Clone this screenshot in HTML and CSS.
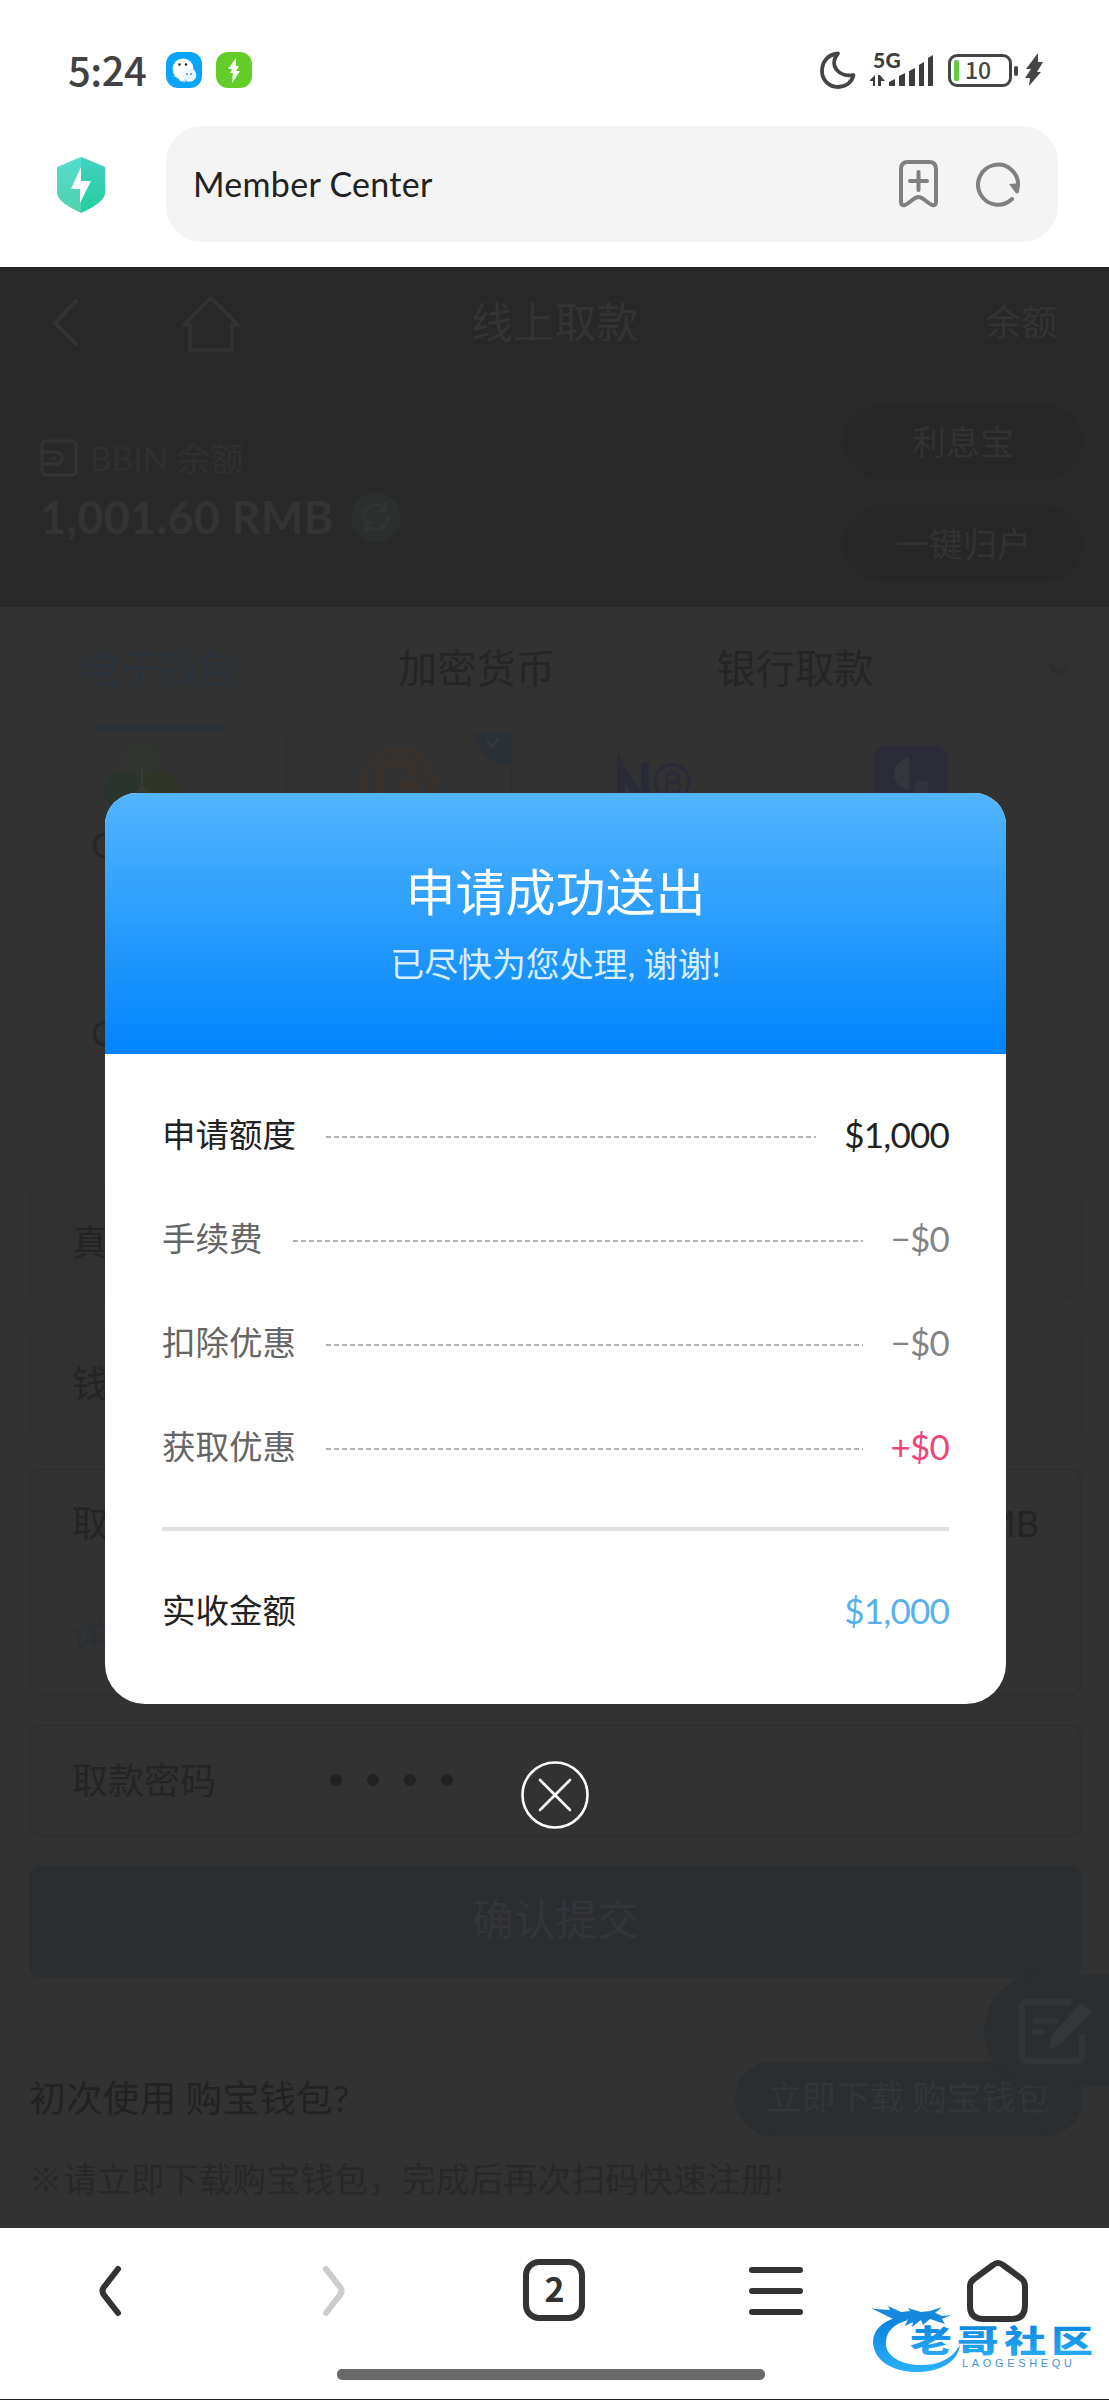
FILE: index.html
```html
<!DOCTYPE html>
<html lang="zh-CN">
<head>
<meta charset="utf-8">
<title>Member Center</title>
<link rel="stylesheet" href="styles.css">
</head>
<body>
<div class="phone">
  <header class="status">
    <span class="clock">5:24</span>
    <svg class="app" width="36" height="36" viewBox="0 0 36 36"><rect width="36" height="36" rx="12" fill="#0aa5fb"/><circle cx="17" cy="17" r="10.500" fill="#fff"/><path d="M7 24c3 1 5 1 7 5l6 1-6-7z" fill="#fff"/><circle cx="23.500" cy="23" r="6.800" fill="#e9f7ff"/><g fill="#333"><circle cx="13.500" cy="12.500" r="1.300"/><circle cx="20" cy="12.500" r="1.300"/><circle cx="21" cy="22" r=".8"/><circle cx="25" cy="22" r=".8"/></g></svg>
    <svg class="app" width="36" height="36" viewBox="0 0 36 36"><rect width="36" height="36" rx="12" fill="#63ce28"/><path d="M20 6l-8 11h4l-2 4h3l-1 10 8-12h-4l3-5h-3z" fill="#fff"/></svg>
    <div class="indicators">
      <svg width="36" height="38" viewBox="0 0 36 38"><path d="M18 2.500C7 3.500 2 11.500 2 20c0 9 7 16 16 16 8 0 14-5 15.500-12C19 27 8 14 18 2.500z" fill="none" stroke="#454545" stroke-width="3.800" stroke-linejoin="round"/></svg>
      <div class="signal">
        <span class="net">5G</span>
        <svg width="66" height="36" viewBox="0 0 66 36" fill="#3d3d3d"><path d="M0 28l5-5v11H3v-5H0zM8 23h2l5 6h-4v5H8z"/><path d="M19 34v-4l6-3v7zM29 34V24l6-3v13zM39 34V19l6-3v18zM49 34V13l5-3v24zM58 34V6l5-3v31z"/></svg>
      </div>
      <div class="battery"><i></i><b>10</b></div>
      <svg class="bolt" width="20" height="34" viewBox="0 0 20 34"><path d="M14 0L2 16h5L1 25h5L5 33 17 19h-4l6-10h-5z" fill="#454545"/></svg>
    </div>
  </header>

  <div class="address">
    <svg class="shield" width="50" height="60" viewBox="0 0 50 60"><defs><linearGradient id="sh" x1="0" y1="0" x2="0" y2="1"><stop offset="0" stop-color="#56dccb"/><stop offset="1" stop-color="#4fd3ae"/></linearGradient><linearGradient id="sr" x1="0" y1="0" x2="0" y2="1"><stop offset="0" stop-color="#42d0c0"/><stop offset="1" stop-color="#23cf9f"/></linearGradient></defs><path d="M25 1L49 11v25c0 9-12 15-24 21C13 51 1 45 1 36V11z" fill="url(#sh)"/><path d="M25 1l24 10v25c0 9-12 15-24 21z" fill="url(#sr)"/><path d="M25 11L15 33h9v14l11-22h-10z" fill="#fff"/></svg>
    <div class="urlbar">
      <span>Member Center</span>
      <svg width="42" height="50" viewBox="0 0 42 50" fill="none" stroke="#808080" stroke-width="4" stroke-linecap="round" stroke-linejoin="round"><path d="M3 10q0-7 7-7h21q7 0 7 7v33q0 4-4 3c-5-2-9-8-13.500-8S12 44 7 46q-4 1-4-3zM20.500 13v18M12 22h17"/></svg>
      <svg width="46" height="46" viewBox="0 0 46 46"><path d="M36 38A20 20 0 1 1 42 25" fill="none" stroke="#808080" stroke-width="4" stroke-linecap="round"/><path d="M33 23l11-1-1 9q-2 3-4 0z" fill="#808080"/></svg>
    </div>
  </div>

  <main class="page">
    <nav class="topbar">
      <svg width="30" height="50" viewBox="0 0 30 50"><path d="M27 3L5 26l22 22" fill="none" stroke="#343434" stroke-width="4"/></svg>
      <svg class="home" width="58" height="58" viewBox="0 0 58 58"><path d="M2 30h6v25h42V30h6L29 3z" fill="none" stroke="#333" stroke-width="3.500"/></svg>
      <h1>线上取款</h1>
      <span class="bal">余额</span>
    </nav>
    <section class="hero">
      <div class="funds">
        <div class="label"><svg width="38" height="38" viewBox="0 0 38 38" fill="none" stroke="#343434" stroke-width="3"><rect x="2" y="2" width="34" height="34" rx="4"/><path d="M2 13h13q7 0 7 6t-7 6H2M12 19h4"/></svg><span>BBIN 余额</span></div>
        <div class="amount"><span>1,001.60 RMB</span><svg width="50" height="50" viewBox="0 0 50 50"><circle cx="25" cy="25" r="25" fill="#2b2f2e"/><path d="M13 26a12 12 0 0 1 21-9M34 10v9h-8M37 24a12 12 0 0 1-21 9M15 39v-8h8" fill="none" stroke="#313534" stroke-width="3"/></svg></div>
      </div>
      <div class="pills"><button>利息宝</button><button>一键归户</button></div>
    </section>

    <div class="tabs"><span class="on">电子钱包</span><span>加密货币</span><span>银行取款</span><i><svg width="22" height="14" viewBox="0 0 22 14"><path d="M2 2l9 9 9-9" fill="none" stroke="#2d2d2d" stroke-width="4"/></svg></i></div>

    <div class="wallets">
      <div class="wallet"><svg width="74" height="74" viewBox="0 0 74 74"><circle cx="37" cy="20" r="20" fill="#303530"/><circle cx="20" cy="45" r="20" fill="#2a342d"/><circle cx="54" cy="45" r="20" fill="#303528"/><path d="M37 20v40M37 42l-14 16M37 42l14 16" stroke="#383a38" stroke-width="2"/></svg><p>C</p></div>
      <div class="wallet picked"><svg width="74" height="74" viewBox="0 0 74 74" fill="none" stroke="#39312b"><circle cx="37" cy="37" r="34" stroke-width="5"/><path d="M54 27Q48 15 36 15C23 15 18 25 18 37s7 22 19 22 16-9 17-20H38" stroke-width="9"/><path d="M29 8l8 7 8-7" stroke-width="5"/></svg><svg class="tick" width="36" height="34" viewBox="0 0 36 34"><path d="M0 0h36v34C18 34 2 20 0 0z" fill="#2a3036"/><path d="M13 9l5 6 7-10" fill="none" stroke="#35393c" stroke-width="2.500"/></svg></div>
      <div class="wallet"><svg width="74" height="74" viewBox="0 0 74 74" fill="none" stroke="#2a2b39"><path d="M4 68V22l24 40V18" stroke-width="8"/><circle cx="55" cy="37" r="17" stroke-width="3.500"/><path d="M50 29h7q5 0 5 4t-5 4h-7m7 0q6 0 6 5t-6 5h-7V27m4-3v5m0 18v5" stroke-width="3"/></svg></div>
      <div class="wallet"><svg width="74" height="74" viewBox="0 0 74 74"><rect width="74" height="74" rx="14" fill="#2b2c37"/><path d="M35 12C15 18 15 40 35 45z" fill="#35353c"/><path d="M40 36h14v24H40z" fill="#31323c"/></svg></div>
      <div class="wallet second"><p>C</p></div>
    </div>

    <form class="fields">
      <div class="field dim">真</div>
      <div class="field dim">钱</div>
      <div class="field tall"><div><span>取</span><span>RMB</span></div><em>详</em></div>
      <div class="field"><span>取款密码</span><span class="dots"><i></i><i></i><i></i><i></i></span></div>
      <div class="submit">确认提交</div>
    </form>
    <div class="download"><span>初次使用 购宝钱包?</span><b>立即下载 购宝钱包</b></div>
    <p class="hint">※请立即下载购宝钱包，完成后再次扫码快速注册!</p>

    <div class="float"><svg width="76" height="66" viewBox="0 0 76 66" fill="none"><path d="M52 3H8q-5 0-5 5v49q0 5 5 5h50q5 0 5-5V35" stroke="#323537" stroke-width="6"/><path d="M14 22h25M14 33h13" stroke="#323537" stroke-width="5"/><path d="M62 4l11 9-32 33-11 4 3-14z" fill="#343638"/></svg></div>

    <section class="modal">
      <header><h2>申请成功送出</h2><p>已尽快为您处理, 谢谢!</p></header>
      <div class="rows">
        <div class="row main"><span>申请额度</span><i></i><b>$1,000</b></div>
        <div class="row"><span>手续费</span><i></i><b>−$0</b></div>
        <div class="row"><span>扣除优惠</span><i></i><b>−$0</b></div>
        <div class="row gain"><span>获取优惠</span><i></i><b>+$0</b></div>
      </div>
      <div class="row total"><span>实收金额</span><b>$1,000</b></div>
    </section>
    <svg class="close" width="70" height="70" viewBox="0 0 70 70" fill="none" stroke="#fff" stroke-width="2.600"><circle cx="35" cy="35" r="32.500"/><path d="M20 20l30 30M50 20L20 50" stroke-linecap="round"/></svg>
  </main>

  <footer class="browser">
    <div class="nav">
      <svg width="64" height="64" viewBox="0 0 64 64"><path d="M39 10L25 28q-3 4 0 8l14 18" fill="none" stroke="#333" stroke-width="6" stroke-linecap="round"/></svg>
      <svg width="64" height="64" viewBox="0 0 64 64"><path d="M25 10l14 18q3 4 0 8L25 54" fill="none" stroke="#ccc" stroke-width="6" stroke-linecap="round"/></svg>
      <div class="count">2</div>
      <svg width="64" height="64" viewBox="0 0 64 64"><path d="M8 11h48M8 32h48M8 53h48" stroke="#333" stroke-width="6" stroke-linecap="round"/></svg>
      <svg width="64" height="64" viewBox="0 0 64 64"><path d="M27 6q5-4 10 0l19 14q3 3 3 7v19q0 14-13 14H18Q4 60 4 47V27q0-4 4-7z" fill="none" stroke="#333" stroke-width="6"/></svg>
    </div>
    <div class="gesture"></div>
    <svg class="brand" width="226" height="76" viewBox="0 0 226 76">
      <defs><linearGradient id="bl" x1="0" y1="0" x2="0" y2="1"><stop offset="0" stop-color="#087fdd"/><stop offset="1" stop-color="#2bb0fb"/></linearGradient></defs>
      <path d="M32 14C10 19 0 31 4 46c4 17 26 25 46 24 22-1 38-11 40-27-8 15-24 21-42 20C28 62 14 52 16 39c1-10 8-17 22-21z" fill="url(#bl)"/>
      <path d="M1 6l5 1 14 1-2-4 13 6 9-1-2-3 13 4 9-1 12-4-7 6 3 1 4 2 9-1-9 4 3 5-15-5-7 6-2-5-9 7 1-5-8 4 3-7-13 1-8-4-6-3z" fill="#1688de"/>
      <text class="brand-cn" transform="translate(40 50) scale(1.130 .82)" textLength="162" fill="url(#bl)">老哥社区</text>
      <text class="brand-en" x="92" y="65" textLength="110" fill="#4a93d0">LAOGESHEQU</text>
    </svg>
  </footer>
</div>
</body>
</html>
```
FILE: styles.css
```css
* { box-sizing: border-box; }
body { margin: 0; background: #fff; font-family: "Lato", "Noto Sans CJK SC", sans-serif; }
h1, h2, p { margin: 0; font-weight: 400; }
i, em { font-style: normal; }
svg { display: block; flex: none; }
.phone { width: 1109px; height: 2400px; display: flex; flex-direction: column; overflow: hidden; border-bottom: 1px solid #222; }

.status { height: 126px; padding: 14px 65px 0 68px; display: flex; align-items: center; flex: none; }
.clock { width: 98px; padding-bottom: 3px; font: 500 40px/50px "Noto Sans CJK SC", sans-serif; letter-spacing: -.5px; color: #424242; }
.app { margin-right: 14px; }
.indicators { margin-left: auto; display: flex; align-items: center; }
.signal { position: relative; margin-left: 14px; }
.net { position: absolute; left: 3px; top: -3px; font: 900 21px/22px "Lato", sans-serif; letter-spacing: .3px; color: #3d3d3d; }
.battery { position: relative; width: 64px; height: 33px; margin: 0 12px 0 12px; padding-left: 3px; border: 3px solid #454545; border-radius: 9px; display: flex; align-items: center; gap: 6px; }
.battery::after { content: ""; position: absolute; right: -9px; top: 9px; width: 4px; height: 10px; border-radius: 2px; background: #454545; }
.battery i { width: 5px; height: 21px; border-radius: 2px; background: #67c845; }
.battery b { padding-bottom: 2px; font: 500 23px/22px "Noto Sans CJK SC", sans-serif; color: #454545; }

.address { height: 141px; padding: 0 51px 0 56px; display: flex; align-items: flex-start; flex: none; }
.shield { margin-top: 30px; }
.urlbar { width: 892px; height: 116px; margin-left: 60px; padding: 0 36px 0 27px; border-radius: 36px; background: #f4f4f4; display: flex; align-items: center; gap: 36px; }
.urlbar span { flex: 1; padding-bottom: 2px; font-size: 34px; letter-spacing: .3px; color: #222; }

.page { position: relative; height: 1961px; background: #323232; flex: none; }
.topbar { height: 109px; padding: 0 52px 0 50px; border-top: 1px solid #222; background: #282828; display: flex; align-items: center; color: #343434; }
.home { margin: 4px 0 0 102px; }
.topbar h1 { width: 180px; margin-left: 231px; padding-bottom: 5px; font-size: 41.800px; }
.topbar .bal { margin-left: auto; padding-bottom: 4px; font-size: 35.800px; }
.hero { height: 231px; padding: 0 26px 0 40px; background: #292929; display: flex; justify-content: space-between; color: #313131; }
.funds { padding-top: 57px; }
.label { height: 50px; display: flex; align-items: center; gap: 12px; font-size: 33.500px; color: #303030; }
.label span { padding-bottom: 3px; }
.amount { height: 68px; display: flex; align-items: center; gap: 18px; font: 700 45px/60px "Lato", sans-serif; letter-spacing: .3px; color: #343434; }
.pills { padding-top: 28px; display: flex; flex-direction: column; gap: 27px; }
.pills button { width: 240px; height: 75px; padding: 0 0 2px; border: 0; border-radius: 38px; background: #272727; font: 34px/71px "Noto Sans CJK SC", sans-serif; color: #333; }

.tabs { height: 125px; display: grid; grid-template-columns: 318px 317px 373px 101px; color: #252525; font-size: 39.300px; line-height: 121px; text-align: center; }
.tabs span:nth-child(3) { padding-right: 53px; }
.tabs .on { color: #2a323b; background: linear-gradient(#2a3038, #2a3038) 95px 117px / 129px 7px no-repeat; }
.tabs i { background: #313131; display: grid; place-items: center; }

.wallets { height: 454px; display: grid; grid-template-columns: 253px 32px 227px 286px 311px; grid-template-rows: 188px 188px; }
.wallet { position: relative; padding-top: 13px; border-right: 1px solid #303030; }
.wallet svg { margin-left: 105px; }
.wallet p { margin: 3px 0 0 91px; font-size: 35px; line-height: 44px; color: #262626; }
.wallet.picked { grid-column: 3; border: solid #2a3036; border-width: 0 2px; }
.wallet.picked svg { margin-left: 75px; }
.wallet.picked .tick { position: absolute; top: 0; right: 0; margin: 0; }
.wallet:nth-child(4) { border: 0; }
.wallet:nth-child(4) svg { margin-left: 76px; }
.wallet.second { grid-row: 2; grid-column: 1; padding-top: 87px; border: 0; }

.fields { padding: 0 27px 0 29px; color: #242424; font-size: 36px; }
.field { height: 113px; margin-bottom: 28px; padding: 0 41px 5px; border: 2px solid #2f2f2f; border-radius: 12px; display: flex; align-items: center; }
.field.dim { background: #313131; border-color: #303030; }
.tall { height: 228px; display: block; padding-top: 27px; line-height: 52px; }
.tall div { display: flex; justify-content: space-between; }
.tall em { display: block; margin-top: 60px; color: #2a3038; font-size: 34px; }
.dots { display: flex; gap: 25px; margin: 3px 0 0 114px; }
.dots i { width: 12px; height: 12px; border-radius: 50%; background: #222; }
.submit { height: 113px; border-radius: 12px; background: #2a2e31; font-size: 41.800px; line-height: 109px; text-align: center; color: #34343a; }
.download { margin: 84px 27px 0 29px; height: 74px; display: flex; align-items: center; justify-content: space-between; color: #222; font-size: 36.800px; }
.download span { padding-bottom: 6px; }
.download b { width: 347px; height: 74px; border-radius: 37px; background: #2a2e31; color: #34343a; font-size: 34.200px; font-weight: 400; line-height: 69px; text-align: center; }
.hint { margin: 17px 0 0 29px; font-size: 33.900px; line-height: 52px; color: #282828; }
.float { position: absolute; right: 0; top: 1708px; width: 125px; height: 112px; padding: 24px 0 0 35px; border-radius: 60px 0 0 60px; background: #2a2e31; }

.modal { position: absolute; left: 105px; top: 526px; width: 901px; height: 911px; border-radius: 32px 32px 40px 40px; background: #fff; overflow: hidden; }
.modal header { height: 261px; padding-top: 65px; background: linear-gradient(#52b5ff, #0084fb); color: #fff; text-align: center; }
.modal h2 { font-size: 50px; line-height: 68px; }
.modal header p { margin-top: 14px; font-size: 33.900px; line-height: 48px; color: #d8eeff; }
.rows { height: 477px; margin: 0 57px; padding-top: 28px; border-bottom: 4px solid #e0e0e0; }
.row { height: 104px; display: flex; align-items: center; color: #656565; font-size: 33.500px; }
.row span { padding-bottom: 3px; }
.row i { flex: 1; height: 2px; margin: 6px 28px 0 30px; background: repeating-linear-gradient(90deg, #b0b0b0 0 5px, transparent 5px 8px); }
.row b { padding-bottom: 1px; font-weight: 400; font-size: 35px; letter-spacing: -.8px; color: #858585; }
.main, .main b { color: #222; }
.gain b { color: #ec4778; }
.total { margin: 27px 57px 0; justify-content: space-between; color: #222; }
.total b { color: #57b1ec; }
.close { position: absolute; left: 520px; top: 1493px; }

.browser { position: relative; flex: 1; background: #fff; }
.nav { padding: 31px 0 0; display: grid; grid-template-columns: repeat(5, 221.800px); justify-items: center; }
.nav > * { height: 64px; }
.nav .count { width: 62px; height: 62px; border: 6px solid #333; border-radius: 16px; font: 700 34px/45px "Noto Sans CJK SC", sans-serif; text-align: center; color: #333; }
.gesture { width: 428px; height: 11px; margin: 46px 0 0 337px; border-radius: 5px; background: #696969; }
.brand { position: absolute; left: 870px; top: 74px; }
.brand-cn { font: 900 37px "Noto Sans CJK SC", sans-serif; }
.brand-en { font: 11px "Liberation Sans", sans-serif; }
```
